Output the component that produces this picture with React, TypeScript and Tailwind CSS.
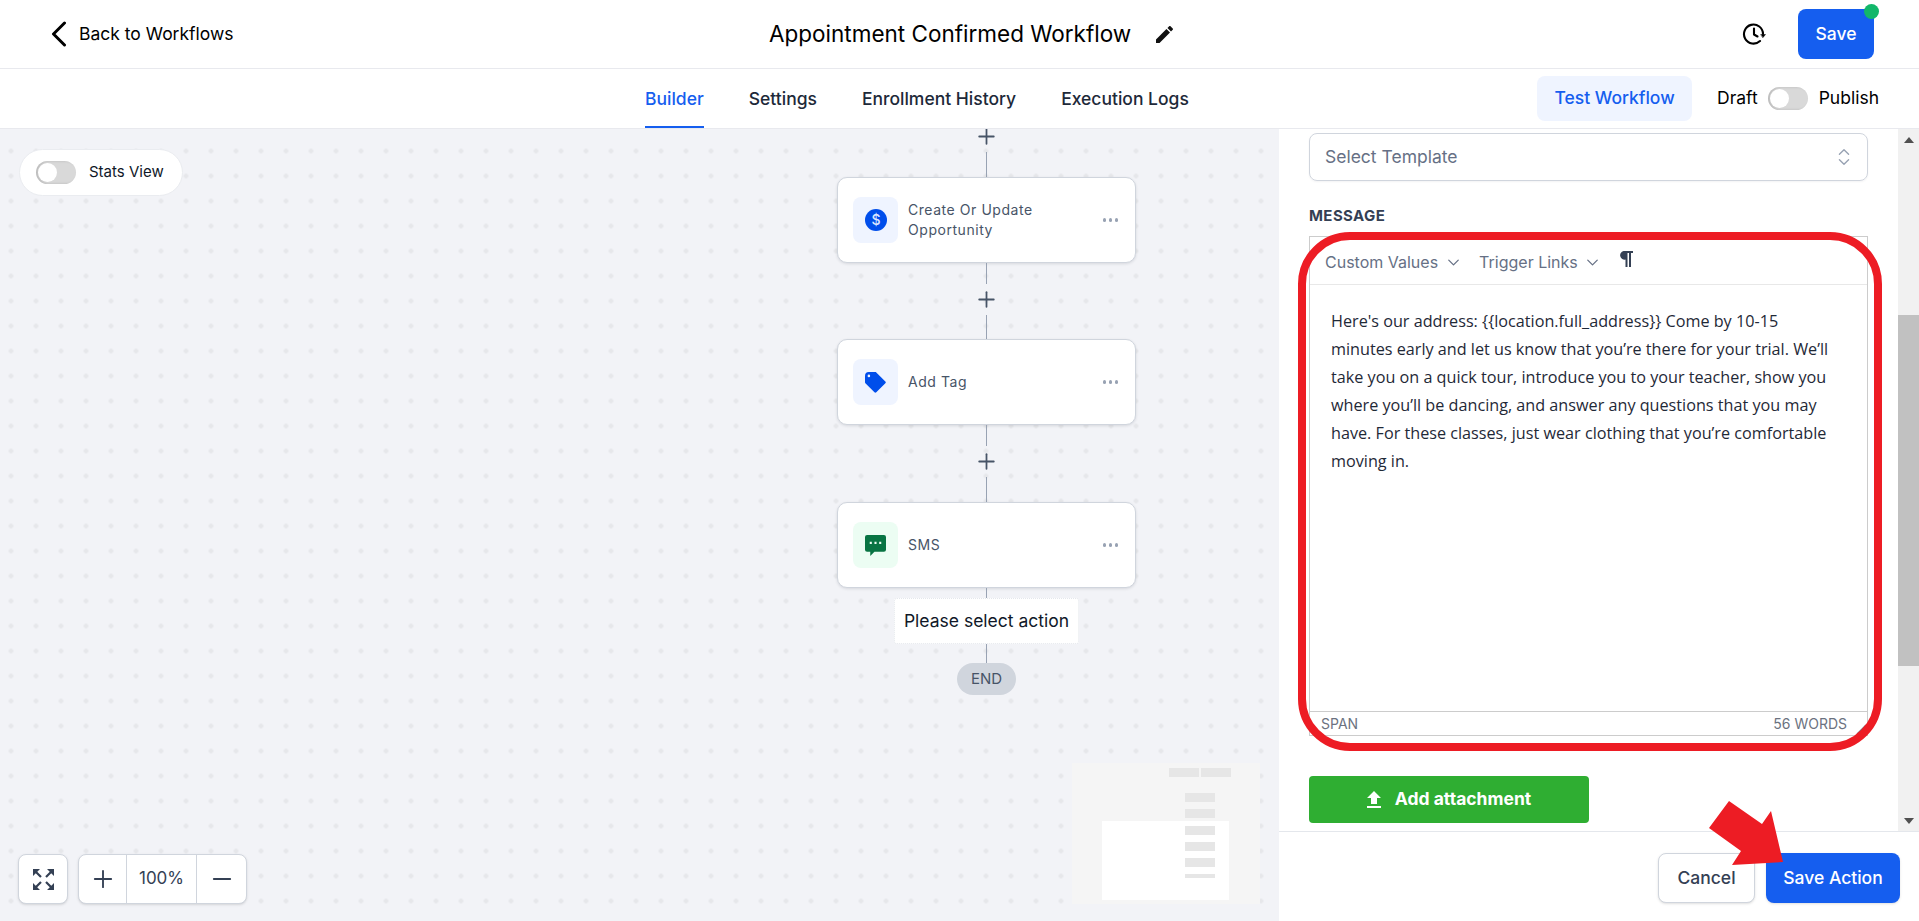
import { ChevronDown, ChevronsUpDown, Minus, Plus } from "lucide-react";

const tabs = ["Builder", "Settings", "Enrollment History", "Execution Logs"];

function Toggle() {
  return (
    <div className="flex h-[23px] w-[40px] items-center rounded-full bg-[#d9d9d9] pl-[2px] shadow-[inset_2px_0_3px_rgba(0,0,0,0.15)]">
      <div className="size-[19px] rounded-full bg-white" />
    </div>
  );
}

function Connector({ plus, h }: { plus?: boolean; h: string }) {
  return (
    <div className="flex flex-col items-center">
      {plus && (
        <div className="flex h-[31px] items-center justify-center">
          <Plus className="size-[25px] text-[#475467]" strokeWidth={1.7} />
        </div>
      )}
      <div className={`w-px bg-[#98a2b3] ${h}`} />
    </div>
  );
}

function Node({ label, tile, children }: { label: string; tile: string; children: React.ReactNode }) {
  return (
    <div className="flex h-[86px] w-[299px] items-center rounded-[10px] border border-[#d0d5dd] bg-white pl-[15px] pr-[17px] shadow-[0_1px_3px_rgba(16,24,40,0.12)]">
      <div className={`flex h-[46px] w-[45px] shrink-0 items-center justify-center rounded-lg ${tile}`}>{children}</div>
      <div className="ml-[10px] flex-1 text-sm leading-5 tracking-[0.55px] text-[#475467]">{label}</div>
      <div className="flex gap-[2.5px]">
        <span className="size-[3.5px] rounded-full bg-[#98a2b3]" />
        <span className="size-[3.5px] rounded-full bg-[#98a2b3]" />
        <span className="size-[3.5px] rounded-full bg-[#98a2b3]" />
      </div>
    </div>
  );
}

function Canvas() {
  return (
    <div className="relative w-[1279px] overflow-hidden bg-[#f2f3f7] bg-[radial-gradient(circle,#e6e7ea_2px,transparent_2.5px)] bg-[length:25px_25px] bg-[position:-1.5px_9.5px]">
      <div className="ml-[837px] -mt-[8px] flex w-[299px] flex-col items-center">
        <Connector plus h="h-[25px]" />
        <Node label="Create Or Update Opportunity" tile="bg-[#eff4ff]">
          <svg viewBox="0 0 22 22" className="size-[22px]">
            <circle cx="11" cy="11" r="11" fill="#004eeb" />
            <text x="11" y="16" textAnchor="middle" fontSize="14" fontWeight="500" fill="#dbe6ff" fontFamily="Inter, sans-serif">$</text>
          </svg>
        </Node>
        <Connector h="h-[21px]" />
        <Connector plus h="h-[24px]" />
        <Node label="Add Tag" tile="bg-[#eff4ff]">
          <svg viewBox="2 2 16.2 16.2" className="size-[21px]">
            <path fill="#004eeb" fillRule="evenodd" d="M17.707 9.293a1 1 0 010 1.414l-7 7a1 1 0 01-1.414 0l-7-7A.997.997 0 012 10V5a3 3 0 013-3h5c.256 0 .512.098.707.293l7 7zM5 6a1 1 0 100-2 1 1 0 000 2z" />
          </svg>
        </Node>
        <Connector h="h-[21px]" />
        <Connector plus h="h-[25px]" />
        <Node label="SMS" tile="bg-[#ecfdf3]">
          <svg viewBox="0 0 20 20" className="size-[21px]">
            <path fill="#087443" fillRule="evenodd" d="M2 0h16a2 2 0 012 2v12a2 2 0 01-2 2H9l-4 4v-4H2a2 2 0 01-2-2V2a2 2 0 012-2zM4.500 6.500v2h2v-2zM9 6.500v2h2v-2zM13.500 6.500v2h2v-2z" />
          </svg>
        </Node>
        <Connector h="h-[10px]" />
        <div className="flex h-[46px] w-[185px] items-center justify-center rounded-[3px] border border-dotted border-[#e4e7ec] bg-white text-[17.5px] text-[#101828]">
          Please select action
        </div>
        <Connector h="h-[19px]" />
        <div className="flex h-[32px] w-[59px] items-center justify-center rounded-full bg-[#d0d5dd] text-[15px] text-[#475467]">END</div>
      </div>

      <div className="absolute left-[19px] top-[20px] flex h-[47px] w-[164px] items-center gap-[13px] rounded-full border border-[#eaecf0] bg-white pl-[16px] text-[15px] text-[#101828]">
        <Toggle />
        <span>Stats View</span>
      </div>

      <div className="absolute left-[18px] top-[725px] flex size-[50px] items-center justify-center rounded-lg border border-[#d0d5dd] bg-white shadow-sm">
        <svg viewBox="0 0 21 21" className="size-[21px]" fill="#344054" stroke="#344054" strokeWidth="2.2">
          <path stroke="none" d="M0 0h7L0 7zM21 0v7L14 0zM0 21v-7L7 21zM21 21h-7L21 14z" />
          <path fill="none" d="M2 2l6 6M19 2l-6 6M2 19l6-6M19 19l-6-6" />
        </svg>
      </div>

      <div className="absolute left-[78px] top-[725px] flex h-[50px] w-[169px] items-center rounded-lg border border-[#d0d5dd] bg-white text-[17px] text-[#344054] shadow-sm">
        <div className="flex h-full w-[48px] items-center justify-center border-r border-[#d0d5dd]">
          <Plus className="size-[28px]" strokeWidth={1.6} />
        </div>
        <div className="flex h-full w-[70px] items-center justify-center border-r border-[#d0d5dd]">100%</div>
        <div className="flex h-full flex-1 items-center justify-center">
          <Minus className="size-[28px]" strokeWidth={1.6} />
        </div>
      </div>

      <svg className="absolute left-[1072px] top-[634px]" width="188" height="141" viewBox="0 0 188 141">
        <rect width="188" height="141" fill="#f5f5f5" />
        <rect x="30" y="58" width="127" height="79" fill="#ffffff" />
        <g fill="#e6e6e6">
          <rect x="97" y="5" width="30" height="9" />
          <rect x="129" y="5" width="30" height="9" />
          <rect x="113" y="30" width="30" height="9" />
          <rect x="113" y="46" width="30" height="9" />
          <rect x="113" y="63" width="30" height="9" />
          <rect x="113" y="79" width="30" height="9" />
          <rect x="113" y="95" width="30" height="9" />
          <rect x="113" y="111" width="30" height="4" />
        </g>
      </svg>
    </div>
  );
}

function EditorPanel() {
  return (
    <div className="flex w-[640px] flex-col bg-white">
      <div className="flex h-[703px] border-b border-[#e4e7ec]">
        <div className="flex-1 pl-[30px] pr-[30px] pt-[4px]">
          <div className="flex h-[48px] items-center justify-between rounded-lg border border-[#d0d5dd] pl-[15px] pr-[12px] text-[17.5px] text-[#667085] shadow-[0_1px_2px_rgba(16,24,40,0.05)]">
            <span>Select Template</span>
            <ChevronsUpDown className="size-[22px] text-[#98a2b3]" strokeWidth={1.5} />
          </div>
          <div className="mt-[26px] text-[15px] font-bold leading-[17px] tracking-[0.4px] text-[#344054]">MESSAGE</div>
          <div className="mt-[12px] flex h-[500px] flex-col border border-[#cccccc] font-['Open_Sans',sans-serif]">
            <div className="flex h-[48px] items-center border-b border-[#e8e8e8] pl-[15px] pt-[3px] font-['Inter',sans-serif] text-base text-[#667085]">
              <span>Custom Values</span>
              <ChevronDown className="ml-[6px] size-[19px] text-[#667085]" strokeWidth={1.6} />
              <span className="ml-[16px]">Trigger Links</span>
              <ChevronDown className="ml-[5px] size-[19px] text-[#667085]" strokeWidth={1.6} />
              <svg viewBox="0 0 14 16" className="ml-[17px] h-[16px] w-[14px] -translate-y-[3px]" fill="#344054">
                <path d="M4.500 0H14V2H12V16H10V2H8.500V16H6.500V8.500A4.250 4.250 0 0 1 4.500 0z" />
              </svg>
            </div>
            <div className="flex-1 whitespace-nowrap pl-[21px] pt-[22px] text-[16.2px] leading-[28px] text-[#1f2937]">
              Here's our address: {"{{location.full_address}}"} Come by 10-15<br />
              minutes early and let us know that you’re there for your trial. We’ll<br />
              take you on a quick tour, introduce you to your teacher, show you<br />
              where you’ll be dancing, and answer any questions that you may<br />
              have. For these classes, just wear clothing that you’re comfortable<br />
              moving in.
            </div>
            <div className="relative flex h-[24px] items-center justify-between border-t border-[#cccccc] pl-[11px] pr-[20px] font-['Inter',sans-serif] text-sm text-[#6b7280]">
              <span>SPAN</span>
              <span>56 WORDS</span>
              <svg viewBox="0 0 10 10" className="absolute bottom-[1px] right-[1px] size-[10px]" stroke="#6b7280" strokeWidth="1.2">
                <path d="M1 10 10 1M6 10l4-4" />
              </svg>
            </div>
          </div>
          <button className="mt-[40px] flex h-[47px] w-[280px] items-center justify-center gap-[14px] rounded bg-[#2fae32] text-[17.5px] font-bold text-white">
            <svg viewBox="5 3 14 17" className="h-[17px] w-[14px]" fill="#ffffff">
              <path d="M9 16h6v-6h4l-7-7-7 7h4zm-4 2h14v2H5z" />
            </svg>
            Add attachment
          </button>
        </div>
        <div className="flex w-[21px] flex-col items-center bg-[#f1f1f1]">
          <div className="flex h-[21px] w-full items-center justify-center">
            <div className="size-0 border-x-[5px] border-b-[6px] border-x-transparent border-b-[#505050]" />
          </div>
          <div className="mt-[165px] h-[351px] w-full bg-[#c1c1c1]" />
          <div className="mt-auto flex h-[21px] w-full items-center justify-center">
            <div className="size-0 border-x-[5px] border-t-[6px] border-x-transparent border-t-[#505050]" />
          </div>
        </div>
      </div>
      <div className="flex flex-1 items-start justify-end gap-[11px] pr-[19px] pt-[21px]">
        <button className="h-[50px] w-[97px] rounded-lg border border-[#d0d5dd] bg-white text-[17.5px] font-medium text-[#344054] shadow-sm">Cancel</button>
        <button className="h-[50px] w-[134px] rounded-lg bg-[#155eef] text-[17.5px] font-medium text-white shadow-sm">Save Action</button>
      </div>
    </div>
  );
}

export default function App() {
  return (
    <div className="relative flex h-screen w-full flex-col overflow-hidden bg-white font-['Inter',sans-serif] text-[#101828]">
      <header className="flex h-[69px] items-center border-b border-[#e8e9ee] pl-[51px] pr-[45px]">
        <svg viewBox="0 0 16 26" className="h-[26px] w-[16px]" fill="none" stroke="#000000" strokeWidth="3" strokeLinecap="round" strokeLinejoin="round">
          <path d="M13.500 2 2.500 13l11 11" />
        </svg>
        <span className="ml-[12px] w-[690px] text-[17.5px] text-black">Back to Workflows</span>
        <h1 className="text-[22.5px] leading-7 text-black">Appointment Confirmed Workflow</h1>
        <svg viewBox="3 3 18 18" className="ml-[25px] size-[17px]" fill="#111111">
          <path d="M3 17.250V21h3.750L17.810 9.940l-3.750-3.750L3 17.250zM20.710 7.040c.390-.390.390-1.020 0-1.410l-2.340-2.340c-.390-.390-1.020-.390-1.410 0l-1.830 1.830 3.750 3.750 1.830-1.830z" />
        </svg>
        <svg viewBox="0 0 24 24" className="ml-auto mr-[32px] size-[24px]" fill="none" stroke="#000000" strokeWidth="2.1" strokeLinecap="round" strokeLinejoin="round">
          <path d="M21 12a9.500 9.500 0 1 0-3 7" />
          <path d="M12 6.500V12.500l3.500 2" />
          <path d="M19 12.500h4.500L21 15.500z" fill="#000000" strokeWidth="0.5" />
        </svg>
        <div className="relative">
          <button className="h-[50px] w-[76px] rounded-lg bg-[#155eef] text-[17.5px] font-medium text-white">Save</button>
          <span className="absolute right-[-5px] top-[-5px] size-[15px] rounded-full bg-[#12b76a]" />
        </div>
      </header>

      <nav className="flex h-[60px] items-stretch border-b border-[#e8e9ee] pl-[645px] pr-[40px]">
        <div className="flex gap-[45px] pt-[1px] text-[17.5px] font-medium text-[#1d2939]">
          {tabs.map((tab, i) => (
            <div key={tab} className={i === 0 ? "flex items-center border-b-2 border-[#155eef] pt-[2px] text-[#155eef]" : "flex items-center"}>
              {tab}
            </div>
          ))}
        </div>
        <div className="ml-auto flex items-center text-[17.5px]">
          <div className="flex h-[45px] w-[155px] items-center justify-center rounded-lg bg-[#eff4ff] font-medium text-[#155eef]">Test Workflow</div>
          <span className="ml-[25px] text-black">Draft</span>
          <div className="ml-[10px]"><Toggle /></div>
          <span className="ml-[11px] text-black">Publish</span>
        </div>
      </nav>

      <main className="flex min-h-0 flex-1">
        <Canvas />
        <EditorPanel />
      </main>

      {/* red annotation drawn on top of the screenshot */}
      <div className="pointer-events-none absolute left-[1298px] top-[232px] h-[519px] w-[584px] rounded-[52px] border-[8px] border-[#ed1c24]" />
      <svg className="pointer-events-none absolute left-[1700px] top-[795px]" width="90" height="75" viewBox="0 0 90 75">
        <polygon fill="#ed1c24" points="71,16 83,67 32,70 41,56 9,33 29,6 62,29" />
      </svg>
    </div>
  );
}
